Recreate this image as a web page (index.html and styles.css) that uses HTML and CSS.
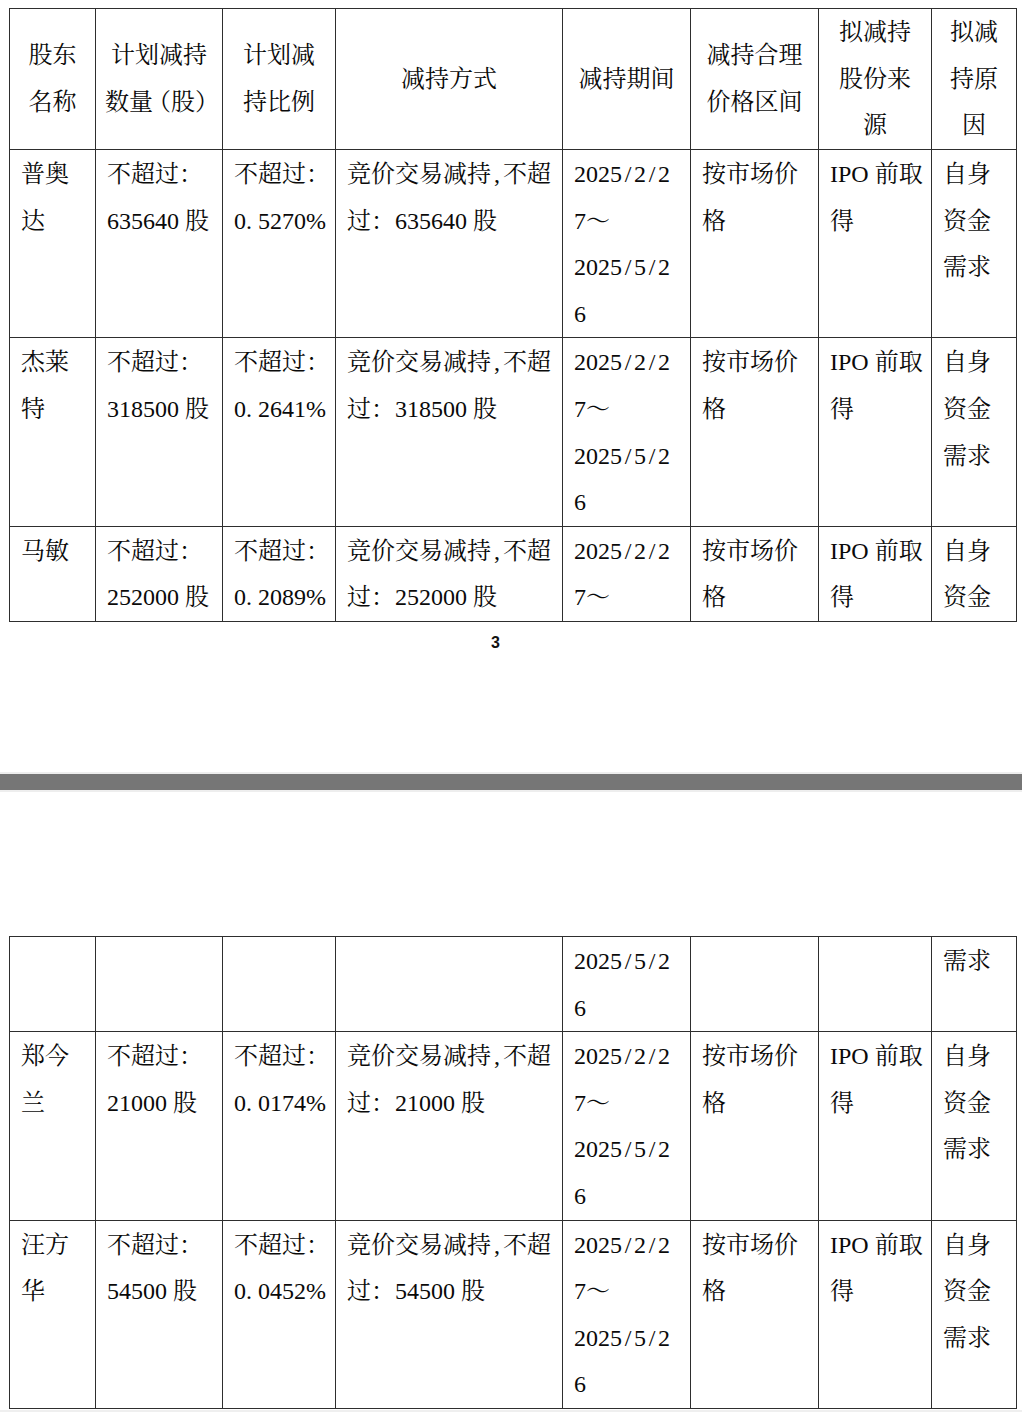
FILE: index.html
```html
<!DOCTYPE html>
<html lang="zh-CN">
<head>
<meta charset="utf-8">
<title>减持计划</title>
<link rel="stylesheet" href="styles.css">
</head>
<body>
<section class="page page-first">
  <table class="grid">
    <colgroup>
      <col class="c1"><col class="c2"><col class="c3"><col class="c4"><col class="c5"><col class="c6"><col class="c7"><col class="c8">
    </colgroup>
    <tr class="head">
      <th>股东<br>名称</th>
      <th>计划减持<br>数<span class="tight">量</span>（股<span class="tight">）</span></th>
      <th>计划减<br>持比例</th>
      <th>减持方式</th>
      <th>减持期间</th>
      <th>减持合理<br>价格区间</th>
      <th>拟减持<br>股份来<br>源</th>
      <th>拟减<br>持原<br>因</th>
    </tr>
    <tr class="row4">
      <td>普奥<br>达</td>
      <td>不超过：<br>635640 股</td>
      <td>不超过：<br>0<span class="hw">.</span>5270%</td>
      <td>竞价交易减持<span class="hc">,</span>不超<br>过：635640 股</td>
      <td>2025<span class="hc">/</span>2<span class="hc">/</span>2<br>7～<br>2025<span class="hc">/</span>5<span class="hc">/</span>2<br>6</td>
      <td>按市场价<br>格</td>
      <td>IPO 前取<br>得</td>
      <td>自身<br>资金<br>需求</td>
    </tr>
    <tr class="row4">
      <td>杰莱<br>特</td>
      <td>不超过：<br>318500 股</td>
      <td>不超过：<br>0<span class="hw">.</span>2641%</td>
      <td>竞价交易减持<span class="hc">,</span>不超<br>过：318500 股</td>
      <td>2025<span class="hc">/</span>2<span class="hc">/</span>2<br>7～<br>2025<span class="hc">/</span>5<span class="hc">/</span>2<br>6</td>
      <td>按市场价<br>格</td>
      <td>IPO 前取<br>得</td>
      <td>自身<br>资金<br>需求</td>
    </tr>
    <tr class="row2">
      <td>马敏</td>
      <td>不超过：<br>252000 股</td>
      <td>不超过：<br>0<span class="hw">.</span>2089%</td>
      <td>竞价交易减持<span class="hc">,</span>不超<br>过：252000 股</td>
      <td>2025<span class="hc">/</span>2<span class="hc">/</span>2<br>7～</td>
      <td>按市场价<br>格</td>
      <td>IPO 前取<br>得</td>
      <td>自身<br>资金</td>
    </tr>
  </table>
  <div class="pagenum">3</div>
</section>
<div class="page-gap"></div>
<section class="page page-second">
  <table class="grid">
    <colgroup>
      <col class="c1"><col class="c2"><col class="c3"><col class="c4"><col class="c5"><col class="c6"><col class="c7"><col class="c8">
    </colgroup>
    <tr class="row2">
      <td></td>
      <td></td>
      <td></td>
      <td></td>
      <td>2025<span class="hc">/</span>5<span class="hc">/</span>2<br>6</td>
      <td></td>
      <td></td>
      <td>需求</td>
    </tr>
    <tr class="row4">
      <td>郑今<br>兰</td>
      <td>不超过：<br>21000 股</td>
      <td>不超过：<br>0<span class="hw">.</span>0174%</td>
      <td>竞价交易减持<span class="hc">,</span>不超<br>过：21000 股</td>
      <td>2025<span class="hc">/</span>2<span class="hc">/</span>2<br>7～<br>2025<span class="hc">/</span>5<span class="hc">/</span>2<br>6</td>
      <td>按市场价<br>格</td>
      <td>IPO 前取<br>得</td>
      <td>自身<br>资金<br>需求</td>
    </tr>
    <tr class="row4">
      <td>汪方<br>华</td>
      <td>不超过：<br>54500 股</td>
      <td>不超过：<br>0<span class="hw">.</span>0452%</td>
      <td>竞价交易减持<span class="hc">,</span>不超<br>过：54500 股</td>
      <td>2025<span class="hc">/</span>2<span class="hc">/</span>2<br>7～<br>2025<span class="hc">/</span>5<span class="hc">/</span>2<br>6</td>
      <td>按市场价<br>格</td>
      <td>IPO 前取<br>得</td>
      <td>自身<br>资金<br>需求</td>
    </tr>
  </table>
</section>
<div class="page-foot"></div>
</body>
</html>
```

FILE: styles.css
```css
html, body {
  margin: 0;
  padding: 0;
  background: #ffffff;
}

body {
  color: #0a0a0a;
  font-family: "Liberation Serif", "Noto Serif CJK SC", "Noto Sans CJK SC", serif;
  font-size: 24px;
}

.page {
  box-sizing: border-box;
}

.page-first {
  height: 772px;
  padding-top: 8px;
}

.page-second {
  padding-top: 144px;
}

.grid {
  border-collapse: collapse;
  table-layout: fixed;
  width: 1007px;
  margin-left: 9px;
}

.c1 { width: 86px; }
.c2 { width: 127px; }
.c3 { width: 113px; }
.c4 { width: 227px; }
.c5 { width: 128px; }
.c6 { width: 128px; }
.c7 { width: 113px; }
.c8 { width: 85px; }

.grid th,
.grid td {
  border: 1px solid #2e2e2e;
  padding: 0 2px 0 11px;
  line-height: 46.6px;
  white-space: nowrap;
  overflow: hidden;
  font-weight: normal;
}

.grid th {
  text-align: center;
  vertical-align: middle;
  padding: 0 2px;
}

.grid td {
  text-align: left;
  vertical-align: top;
  padding-top: 1px;
}

.head th { height: 140px; }
.row4 td { height: 186px; }
.row2 td { height: 93px; }

.hw {
  display: inline-block;
  width: 12px;
  text-align: left;
}

.hc {
  display: inline-block;
  width: 12px;
  text-align: center;
}

.tight {
  letter-spacing: -6px;
}

.pagenum {
  margin-top: 12px;
  padding-left: 491px;
  font-family: "Liberation Sans", "Noto Sans", sans-serif;
  font-size: 16px;
  font-weight: bold;
  line-height: 18px;
  color: #111111;
}

.page-gap {
  height: 16px;
  background: #767676;
  border-top: 2px solid #eeeeee;
  border-bottom: 2px solid #eeeeee;
}

.page-foot {
  height: 12px;
  margin-top: 1px;
  background: #efefef;
}
```
